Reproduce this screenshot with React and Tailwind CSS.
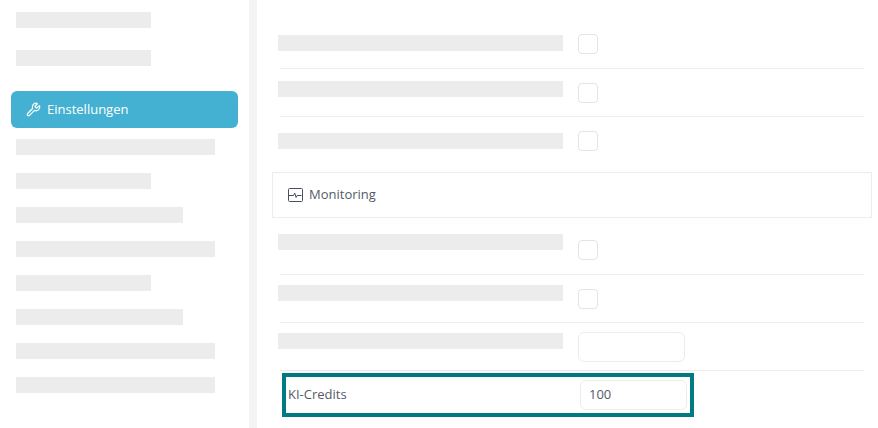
import { Wrench } from 'lucide-react';

function Bar({ className }) {
    return <div className={`h-4 bg-[#ececec] ${className}`} />;
}

function Row({ height, barTop, boxTop, wide, border = true }) {
    return (
        <div className={`flex ${border ? 'border-b border-[#ececec]' : ''}`} style={{ height }}>
            <div className="w-[300px] shrink-0 -ml-[2px]">
                <div className="w-[285px]" style={{ paddingTop: barTop }}>
                    <Bar className="w-full" />
                </div>
            </div>
            <div style={{ paddingTop: boxTop }}>
                {wide ? (
                    <div className="w-[107px] h-[30px] bg-white border border-[#ececec] rounded-md" />
                ) : (
                    <div className="w-5 h-5 bg-white border border-[#e4e4e4] rounded" />
                )}
            </div>
        </div>
    );
}

export default function App() {
    return (
        <div className="flex w-[878px] h-[428px] overflow-hidden bg-white font-['Open_Sans',sans-serif]">
            {/* Sidebar */}
            <aside className="w-[249px] shrink-0 pt-3 pl-4">
                <Bar className="w-[135px]" />
                <Bar className="w-[135px] mt-[22px]" />
                <div className="flex items-center w-[227px] h-[37px] -ml-[5px] mt-[25px] pl-[15px] gap-[6px] rounded-md bg-[#44b1d2] text-white text-[13px]">
                    <Wrench size={15} strokeWidth={2} />
                    <span>Einstellungen</span>
                </div>
                <Bar className="w-[199px] mt-[11px]" />
                <Bar className="w-[135px] mt-[18px]" />
                <Bar className="w-[167px] mt-[18px]" />
                <Bar className="w-[199px] mt-[18px]" />
                <Bar className="w-[135px] mt-[18px]" />
                <Bar className="w-[167px] mt-[18px]" />
                <Bar className="w-[199px] mt-[18px]" />
                <Bar className="w-[199px] mt-[18px]" />
            </aside>
            <div className="w-2 shrink-0 bg-[#f4f4f4]" />

            {/* Settings */}
            <main className="w-[607px] pt-5 pl-[15px]">
                <div className="ml-2 w-[584px]">
                    <Row height={49} barTop={15} boxTop={14} />
                    <Row height={48} barTop={12} boxTop={14} />
                    <Row height={55} barTop={16} boxTop={14} border={false} />
                </div>
                <div className="flex items-center w-[600px] h-[46px] pl-[15px] gap-[6px] border border-[#ececec] text-[13px] text-[#555b66]">
                    <svg width="15" height="14" viewBox="0 0 15 14" fill="none" stroke="#4a4f5c" strokeWidth="1">
                        <rect x="0.5" y="0.5" width="14" height="13" rx="1" />
                        <path d="M1 7.5h4.5l1.2-2.5 1.4 4.5 1-2h4.4" />
                    </svg>
                    <span>Monitoring</span>
                </div>
                <div className="ml-2 w-[584px]">
                    <Row height={57} barTop={16} boxTop={22} />
                    <Row height={48} barTop={10} boxTop={14} />
                    <Row height={48} barTop={10} boxTop={9} wide />
                </div>
                <div className="flex items-center w-[412px] h-[44px] ml-[10px] mt-[2px] pl-[2px] border-4 border-[#007c80] text-[13px] text-[#555b66]">
                    <span className="w-[292px]">KI-Credits</span>
                    <div className="flex items-center w-[107px] h-[30px] pl-2 border border-[#ececec] rounded-md">100</div>
                </div>
            </main>
        </div>
    );
}
